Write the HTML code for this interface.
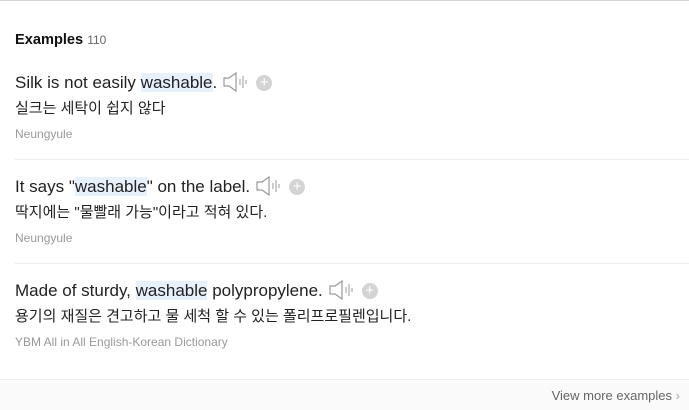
<!DOCTYPE html>
<html><head><meta charset="utf-8"><style>
body{margin:0;width:689px;height:409px;background:#fff;font-family:"Liberation Sans","Noto Sans CJK KR",sans-serif;position:relative;overflow:hidden}
.top{position:absolute;left:0;top:0;width:689px;height:1px;background:#d6d6d6}
.h{position:absolute;left:15px;top:32px;font-size:14.6px;font-weight:bold;color:#111}
.h span{font-size:12px;color:#666;font-weight:normal}
.blk{position:absolute;left:15px;width:674px;height:87px;border-bottom:1px solid #ececec}
.en{position:absolute;top:0;left:0;font-size:17px;color:#222;white-space:nowrap;line-height:22px}
.en b{font-weight:normal;background:#e6f1fb}
.ko{position:absolute;top:27px;left:0;font-size:15px;color:#222;line-height:20px}
.src{position:absolute;top:55px;left:0;font-size:12px;color:#999}
.ic{display:inline-block;vertical-align:-4px;margin-left:6px}
.plus{display:inline-block;width:16px;height:16px;border-radius:50%;background:#d4d4d4;color:#fff;font-size:15px;line-height:15px;text-align:center;vertical-align:1px;margin-left:8px}
.foot{position:absolute;left:0;top:379px;width:689px;height:30px;background:#fafafa;border-top:1px solid #efefef}
.foot div{position:absolute;right:9px;top:8px;font-size:13px;color:#666}
</style></head><body>
<div class="top"></div>
<div class="h">Examples <span>110</span></div>

<div class="blk" style="top:72px;height:87px">
<div class="en">Silk is not easily <b>washable</b>.<svg class="ic" width="25" height="20" viewBox="0 0 25 20"><path d="M1 6h5l7-5v18l-7-5H1z" fill="none" stroke="#999" stroke-width="1.2"/><path d="M17 7v6M20 4v12M23 8v4" stroke="#999" stroke-width="1"/></svg><span class="plus">+</span></div>
<div class="ko">실크는 세탁이 쉽지 않다</div>
<div class="src">Neungyule</div>
</div>

<div class="blk" style="top:176px;height:87px">
<div class="en">It says "<b>washable</b>" on the label.<svg class="ic" width="25" height="20" viewBox="0 0 25 20"><path d="M1 6h5l7-5v18l-7-5H1z" fill="none" stroke="#999" stroke-width="1.2"/><path d="M17 7v6M20 4v12M23 8v4" stroke="#999" stroke-width="1"/></svg><span class="plus">+</span></div>
<div class="ko">딱지에는 "물빨래 가능"이라고 적혀 있다.</div>
<div class="src">Neungyule</div>
</div>

<div class="blk" style="top:280px;border:none">
<div class="en">Made of sturdy, <b>washable</b> polypropylene.<svg class="ic" width="25" height="20" viewBox="0 0 25 20"><path d="M1 6h5l7-5v18l-7-5H1z" fill="none" stroke="#999" stroke-width="1.2"/><path d="M17 7v6M20 4v12M23 8v4" stroke="#999" stroke-width="1"/></svg><span class="plus">+</span></div>
<div class="ko">용기의 재질은 견고하고 물 세척 할 수 있는 폴리프로필렌입니다.</div>
<div class="src">YBM All in All English-Korean Dictionary</div>
</div>

<div class="foot"><div>View more examples <span style="color:#aaa">›</span></div></div>
</body></html>
